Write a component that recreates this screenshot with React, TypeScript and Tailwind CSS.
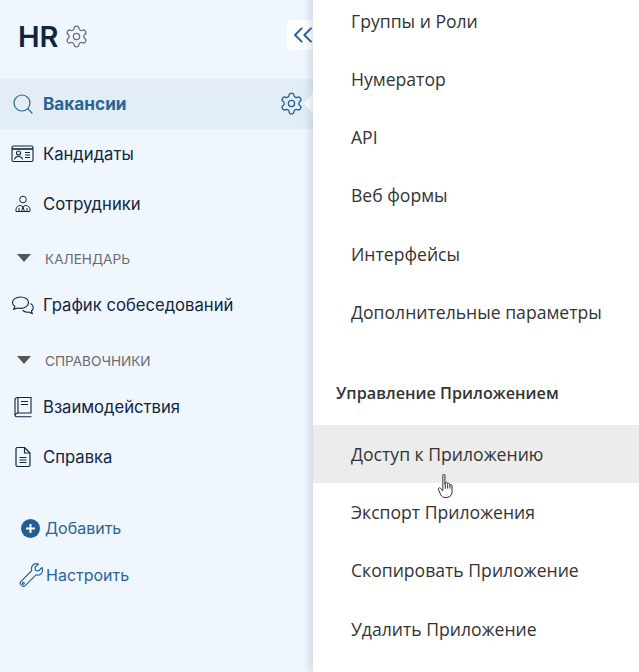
import React from "react";
import { ChevronsLeft, Search, Settings } from "lucide-react";

const ink = "#0f2540";
const blue = "#2a6496";

const IdCard = () => (
  <svg width="24" height="20" viewBox="0 0 24 20" fill="none" stroke={ink} strokeWidth="1.1">
    <rect x="1" y="2" width="21" height="15.5" rx="1.5" />
    <path d="M1 5h21" strokeWidth="1.6" />
    <circle cx="7.5" cy="9" r="2" />
    <path d="M3.5 15.5c.4-2.400 2-3 4-3s3.600.6 4 3" />
    <path d="M14 8.500h5M14 11h5M14 13.500h5" />
  </svg>
);

const Employee = () => (
  <svg width="18" height="20" viewBox="0 0 18 20" fill="none" stroke={ink} strokeWidth="1">
    <circle cx="9" cy="5.500" r="3.300" />
    <path d="M2 17.500c-.5-4 1.500-6 5-6l2 1.500 2-1.500c3.500 0 5.500 2 5 6z" />
    <path d="M9 13l-1.500 4.500M9 13l1.500 4.500M5 14v3.500M13 14v3.500" />
  </svg>
);

const Chat = () => (
  <svg width="24" height="20" viewBox="0 0 24 20" fill="none" stroke={ink} strokeWidth="1.1" strokeLinejoin="round">
    <path d="M9.500 2C5 2 1.500 4.500 1.500 7.500c0 1.700 1 3 2.500 4l-1.500 3 4-1.500c1 .3 2 .4 3 .4 4.500 0 8-2.700 8-5.900S14 2 9.500 2z" />
    <path d="M19.500 8.500c1.800 1 2.800 2.400 2.800 4 0 1.300-.7 2.500-1.800 3.300l.8 3-3.300-1.800c-2.500.5-5-.2-6.500-1.800" />
  </svg>
);

const Book = () => (
  <svg width="20" height="22" viewBox="0 0 20 22" fill="none" stroke={ink} strokeWidth="1.1">
    <path d="M5 1.500h13v15.500H5z" />
    <path d="M5 1.500C3 1.500 2 2.500 2 4v15c0 1 .8 1.700 2 1.700h14.500" />
    <path d="M5 17c-1.500 0-2.500.5-3 2" />
    <path d="M8 5.500h7M8 8.500h7" />
  </svg>
);

const Doc = () => (
  <svg width="18" height="22" viewBox="0 0 18 22" fill="none" stroke={ink} strokeWidth="1.2" strokeLinejoin="round">
    <path d="M3 1.500h7.500L16 7v12a1.500 1.500 0 0 1-1.500 1.500h-11A1.500 1.500 0 0 1 2 19V3a1.500 1.500 0 0 1 1-1.500z" />
    <path d="M10.500 1.500V7H16" />
    <path d="M5.500 11.500h7M5.500 14h7M5.500 16.500h7" />
  </svg>
);

const Wrench = () => (
  <svg width="25" height="25" viewBox="0 0 25 25" fill="none" stroke={blue} strokeWidth="1.200" strokeLinejoin="round">
    <path d="M23 4.500l-3.500 3.500-3-.6-.6-3L19.500 1c-2.500-.8-5 0-6.200 1.800-1 1.500-1.100 3.200-.5 4.700L2 18.300c-1 1-1 2.500 0 3.500l.8.800c1 1 2.500 1 3.500 0L17 11.800c1.500.6 3.200.4 4.600-.6C23.400 10 24 7 23 4.500z" />
    <circle cx="4.300" cy="20.300" r="1" />
  </svg>
);

const Caret = () => <span className="h-0 w-0 border-x-[7px] border-t-[8px] border-x-transparent border-t-[#555555]" />;

const Hand = () => (
  <svg className="absolute left-[124px] top-[49px]" width="19" height="24" viewBox="0 0 17 23" fill="#ffffff" stroke="#222222" strokeWidth="0.9" strokeLinejoin="round">
    <path d="M5 1.200c0-1.400 2-1.400 2 0V10l.4-1.500c.6-1 2-.8 2 .5v1l.2-.5c.6-.9 2-.7 2 .5v1l.2-.4c.6-.8 2-.6 2 .6v5.800c0 3-2 5.500-5 5.500H7c-2 0-3.200-1-4-2.500L.8 15c-.6-1.200.7-2.300 1.800-1.400L5 16z" />
    <path d="M7.400 10v4M9.600 10.500v3.500M11.800 11v3" />
  </svg>
);

function NavItem({ icon, label, active }: { icon: React.ReactNode; label: string; active?: boolean }) {
  return (
    <div className={`flex h-[50px] items-center ${active ? "bg-[#e2edf6]" : ""}`}>
      <span className="flex w-[43px] shrink-0 items-center justify-center pl-[3px]">{icon}</span>
      <span className={active ? "text-[17.200px] font-bold text-[#2a6496]" : "text-[16.650px] text-[#0f2540]"}>{label}</span>
    </div>
  );
}

function Section({ label }: { label: string }) {
  return (
    <div className="flex h-[50px] items-center pl-[17px]">
      <Caret />
      <span className="ml-[14px] pt-[2px] text-[13.600px] text-[#6b6b6b]">{label}</span>
    </div>
  );
}

function MenuItem({ label, active }: { label: string; active?: boolean }) {
  return (
    <div className={`relative flex h-[58.200px] items-center pl-[38px] text-[17.600px] text-[#333333] ${active ? "bg-[#ececec]" : ""}`}>
      {label}
      {active && <Hand />}
    </div>
  );
}

export default function App() {
  return (
    <div className="flex h-[672px] w-[639px] overflow-hidden bg-white font-['Inter',sans-serif]">
      <aside className="relative w-[313px] shrink-0 bg-[#f0f6fe]">
        <div className="flex h-[79px] items-center pb-[7px] pl-[18px]">
          <span className="text-[29px] font-semibold leading-none text-[#0f2540]">HR</span>
          <Settings size={25} strokeWidth={1.200} className="ml-[5px] text-[#6e6e6e]" />
        </div>
        <div className="absolute right-0 top-[20px] flex h-[30px] w-[26px] items-center justify-end rounded-l bg-white">
          <ChevronsLeft size={32} strokeWidth={1.500} className="-mr-[6px] text-[#2a6496]" />
        </div>

        <div className="relative">
          <NavItem active icon={<Search size={24} strokeWidth={1.200} className="text-[#2a6496]" />} label="Вакансии" />
          <Settings size={25} strokeWidth={1.300} className="absolute left-[279px] top-[12px] text-[#2a6496]" />
          <span className="absolute right-0 top-[14px] h-[21px] w-[9px] bg-white [clip-path:polygon(100%_0,0_50%,100%_100%)]" />
        </div>
        <NavItem icon={<IdCard />} label="Кандидаты" />
        <NavItem icon={<Employee />} label="Сотрудники" />
        <div className="mt-[4px]">
          <Section label="КАЛЕНДАРЬ" />
        </div>
        <div className="-mt-[3px]">
          <NavItem icon={<Chat />} label="График собеседований" />
        </div>
        <div className="mt-[5px]">
          <Section label="СПРАВОЧНИКИ" />
        </div>
        <div className="-mt-[3px]">
          <NavItem icon={<Book />} label="Взаимодействия" />
          <NavItem icon={<Doc />} label="Справка" />
        </div>

        <div className="mt-[31px] flex h-[30px] items-center pl-[21px] text-[16px] text-[#2a6496]">
          <span className="flex h-[19px] w-[19px] items-center justify-center rounded-full bg-[#1f5f96]">
            <svg width="11" height="11" viewBox="0 0 11 11" stroke="#ffffff" strokeWidth="2">
              <path d="M5.500 1v9M1 5.500h9" />
            </svg>
          </span>
          <span className="ml-[5px]">Добавить</span>
        </div>
        <div className="mt-[17px] flex h-[30px] items-center pl-[19px] text-[16px] text-[#2a6496]">
          <Wrench />
          <span className="ml-[2px]">Настроить</span>
        </div>
      </aside>

      <main className="relative z-10 -mt-2 h-[680px] flex-1 bg-white font-['Open_Sans',sans-serif] shadow-[-3px_0_8px_rgba(60,80,110,0.18)]">
        <MenuItem label="Группы и Роли" />
        <MenuItem label="Нумератор" />
        <MenuItem label="API" />
        <MenuItem label="Веб формы" />
        <MenuItem label="Интерфейсы" />
        <MenuItem label="Дополнительные параметры" />
        <div className="flex h-[84px] items-end pb-[20px] pl-[23px] text-[16.200px] font-semibold text-[#333333]">Управление Приложением</div>
        <MenuItem active label="Доступ к Приложению" />
        <MenuItem label="Экспорт Приложения" />
        <MenuItem label="Скопировать Приложение" />
        <MenuItem label="Удалить Приложение" />
      </main>
    </div>
  );
}
